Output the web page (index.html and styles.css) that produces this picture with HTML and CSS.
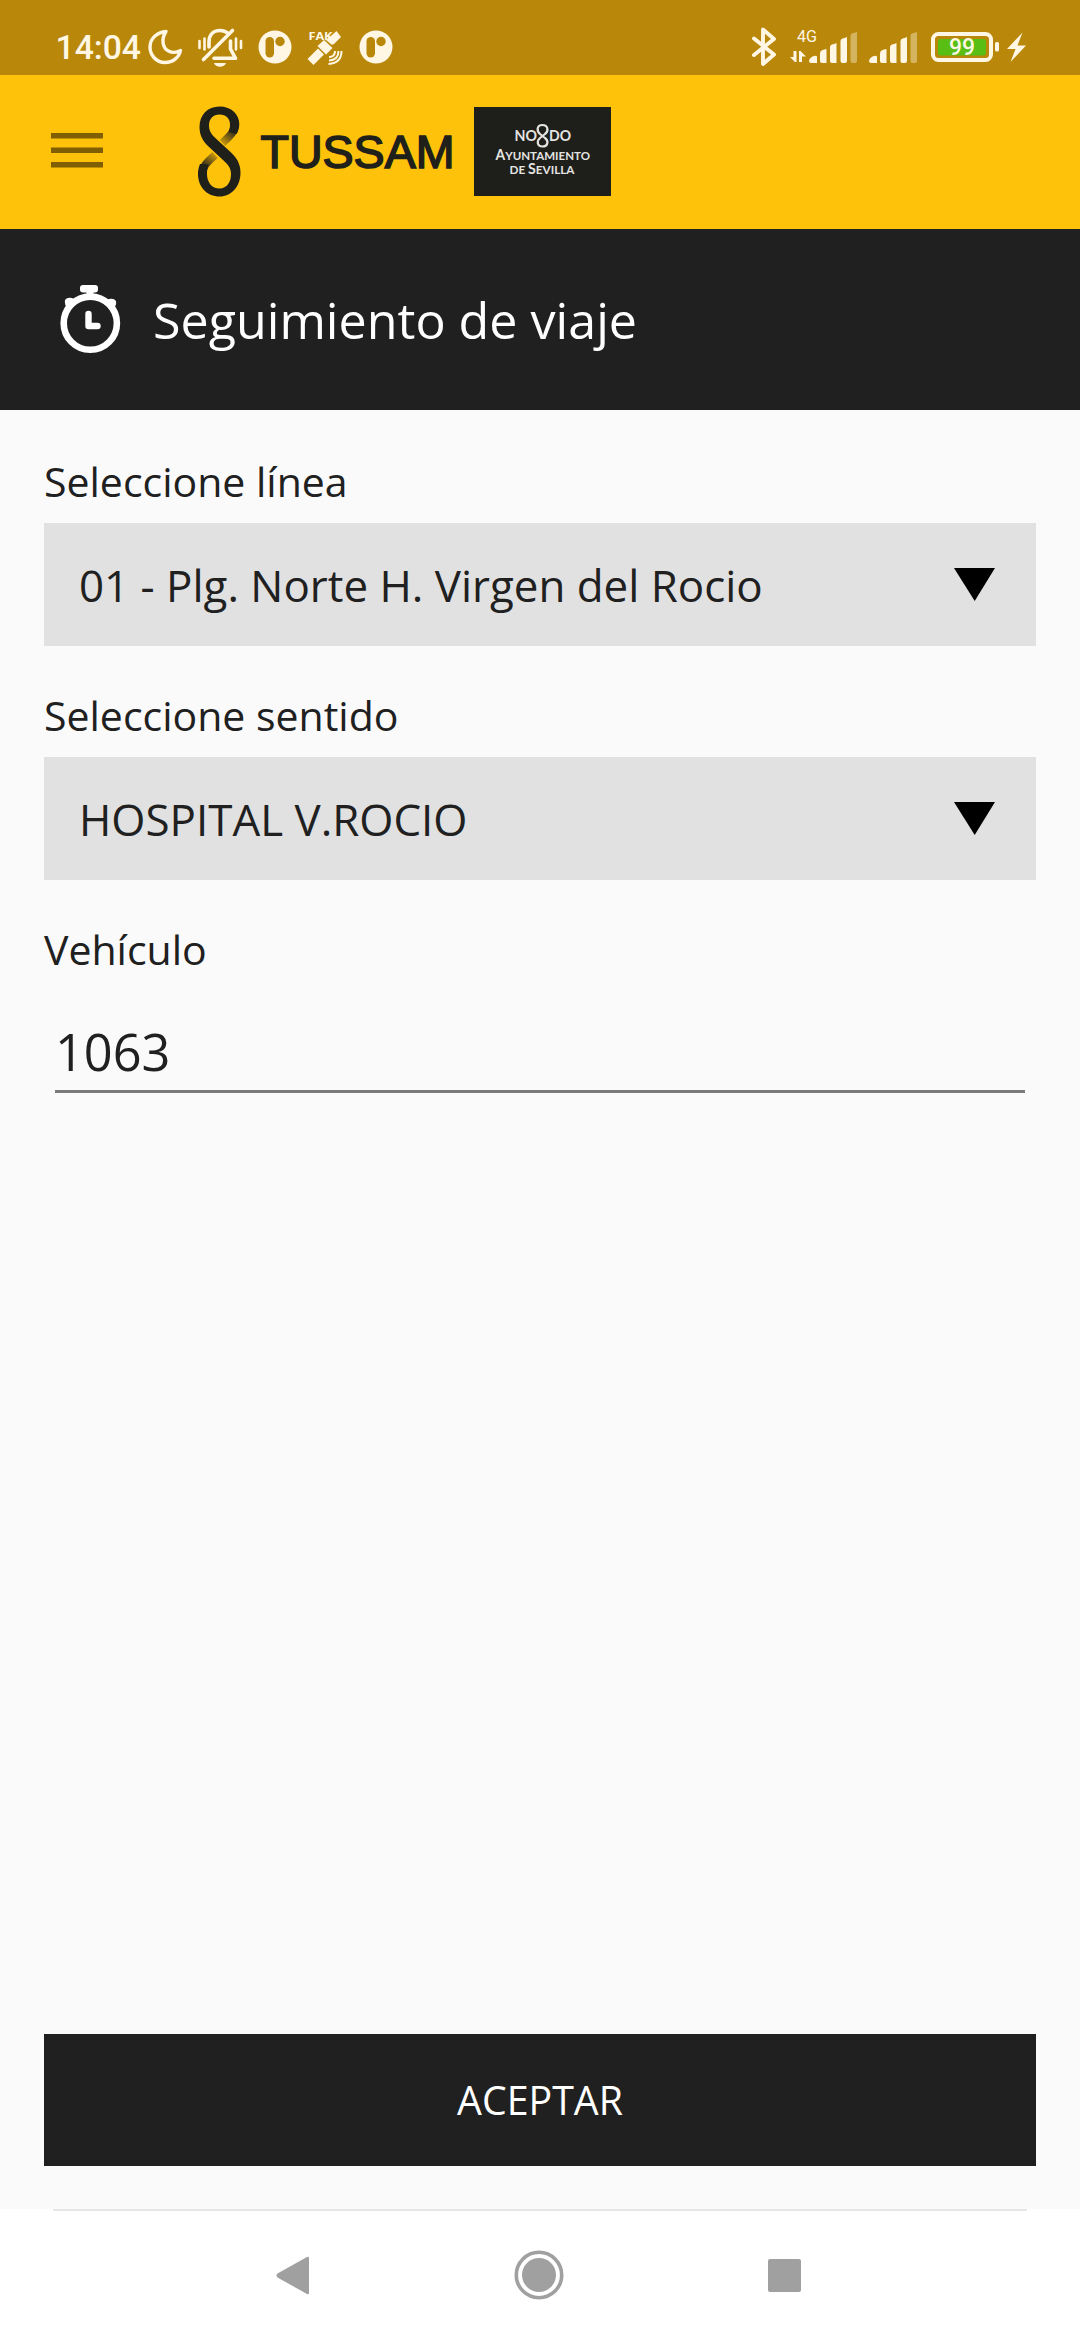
FILE: index.html
```html
<!DOCTYPE html>
<html lang="es">
<head>
<meta charset="utf-8">
<title>Seguimiento de viaje</title>
<link rel="stylesheet" href="styles.css">
</head>
<body>
<div class="screen">
  <div class="status">
    <span class="time">14:04</span>
    <svg class="moon" width="38" height="38" viewBox="146 28 38 38"><path d="M166 31.500C158 32 150 38 150 47c0 8 6 15.500 15 15.500 8 0 14-5 15.500-12-3.500 2-8 2.500-12 .5-6-3-7.500-12-2.500-19.500z" fill="none" stroke="#fff7e3" stroke-width="3.400" stroke-linejoin="round"/></svg>
    <svg class="bell" width="46" height="42" viewBox="197 27 46 42"><g fill="none" stroke="#fff7e3" stroke-width="3.600" stroke-linecap="round" stroke-linejoin="round"><path d="M209 47V42c0-7 4-11.500 11-11.500 2.500 0 5 .7 7 2M230.500 41v8l5 9.300H214M203.500 59.500l29-29"/><path d="M199.500 41v7M204.500 38.500v11M236 38.500v11M241 41v7" stroke-width="2.600"/></g><path d="M214 63h12c-1.500 5-10.500 5-12 0z" fill="#fff7e3"/></svg>
    <svg class="round" width="34" height="34" viewBox="0 0 34 34"><circle cx="17" cy="17" r="16.500" fill="#fff7e3"/><rect x="7.500" y="7" width="8.500" height="20.500" rx="4.200" fill="#b98709"/><circle cx="22" cy="11.500" r="4.700" fill="#b98709"/></svg>
    <svg class="sat" width="38" height="38" viewBox="306 29 38 38"><g fill="#fff7e3"><path d="M307.500 59l10.500-10.500 6 6L313.500 65z"/><path d="M317.500 46l6.500-6 8.500 8-6.500 6.500z"/><path d="M328.500 38l8-7 4.500 6-7.500 7.500z"/><path d="M326 40l4-4 5 6-3 3z"/></g><g fill="none" stroke="#fff7e3" stroke-width="2"><path d="M335 51q0 6-6 6M338.500 51q0 9-9.500 9.500M341.500 51q0 12-13 13"/></g><text x="308.500" y="40" class="fake" textLength="24" lengthAdjust="spacingAndGlyphs">FAK</text></svg>
    <svg class="round2" width="34" height="34" viewBox="0 0 34 34"><circle cx="17" cy="17" r="16.500" fill="#fff7e3"/><rect x="7.500" y="7" width="8.500" height="20.500" rx="4.200" fill="#b98709"/><circle cx="22" cy="11.500" r="4.700" fill="#b98709"/></svg>
    <svg class="system" width="278" height="44" viewBox="750 25 278 44">
      <path d="M753 38.500l20 16-11 9.500V29.500l11 9.500-20 16" fill="none" stroke="#fff7e3" stroke-width="3.900" stroke-linecap="round" stroke-linejoin="round"/>
      <text x="796" y="42" class="net" textLength="20" lengthAdjust="spacingAndGlyphs">4G</text>
      <g fill="#fff7e3">
        <path d="M792.500 51h3v11h-1.500l-5-5h3.500zM798 62V51h1.500l5.500 5.500h-4V62z"/>
        <path id="bars" d="M808 61q0-1.500 1.500-3l2-1.500q3.500-1.500 4.500 0V63h-6q-2 0-2-2zM819 53.500q0-2.500 2-3.200t4.500-1.300V63H821q-2 0-2-2zM829 47q0-2 2-2.500t4.500-1.500V63H831q-2 0-2-2zM839.500 41q0-2 2-2.500t4.500-1.500V61q0 2-2 2h-2.500q-2 0-2-2z"/>
        <path id="weak" opacity=".4" d="M849.500 35.500q0-2 2-2.300t4.500-1.200V61q0 2-2 2h-2.500q-2 0-2-2z"/>
        <use href="#bars" x="60"/><use href="#weak" x="60"/>
        <rect x="994" y="42" width="4" height="9.500" rx="1.500"/>
        <path d="M1021.500 32.500L1006 49h8.500l-5 13 15.500-16.500h-8.500z"/>
      </g>
      <rect x="932" y="34" width="58" height="26" rx="5.500" fill="none" stroke="#fff7e3" stroke-width="4"/>
      <rect x="937" y="39" width="48" height="16.500" rx="3" fill="#59be14"/>
      <text x="948" y="55.300" class="level" textLength="26" lengthAdjust="spacingAndGlyphs">99</text>
    </svg>
  </div>

  <header class="appbar">
    <svg width="52" height="35" viewBox="0 0 52 35"><path d="M0 0h52v5.500H0zM0 14.500h52V20H0zM0 29h52v5.500H0z" fill="#805f03"/></svg>
    <svg class="logo" width="262" height="96" viewBox="196 103 262 96">
      <defs>
        <linearGradient id="up" gradientUnits="userSpaceOnUse" x1="224" y1="144" x2="235" y2="130"><stop offset="0" stop-color="#c4940d"/><stop offset="1" stop-color="#20201b"/></linearGradient>
        <linearGradient id="down" gradientUnits="userSpaceOnUse" x1="214" y1="154" x2="204" y2="168"><stop offset="0" stop-color="#c4940d"/><stop offset="1" stop-color="#20201b"/></linearGradient>
      </defs>
      <path d="M222.500 143C230 136 235 131.500 235 123.500" fill="none" stroke="url(#up)" stroke-width="8"/>
      <path d="M215 155C206 163 202 167 202 176" fill="none" stroke="url(#down)" stroke-width="8"/>
      <path fill-rule="evenodd" fill="#20201b" d="M219.500 106.500c12 0 20 8 19.800 18-.1 4-1.300 7-2.600 9.500l-8-2c1-2.500 1.300-5 1.300-7.500 0-6-4-10-10.500-10s-10.500 4.500-10.500 11c0 6.500 3.500 10 8.500 14.500l13 12c5.500 5 10 11 10 20.500 0 14-9 24-21 24s-21.500-9-21.500-22.500c0-4 .8-7 2-10l8.500.5c-1.200 3-1.500 6-1.500 9.500 0 8.500 5 14.500 12.500 14.500S231 182 231 174c0-6-3-9.500-8-14l-14.500-13.500c-5.500-5-9-11-9-19.500 0-12 8-20.500 20-20.500z"/>
      <text x="260.500" y="168" class="brand" textLength="194" lengthAdjust="spacingAndGlyphs">TUSSAM</text>
    </svg>
    <svg class="badge" width="137" height="89" viewBox="474 107 137 89">
      <g class="council"><text x="514.500" y="140.500" font-size="15.500" textLength="22.500" lengthAdjust="spacingAndGlyphs">NO</text><text x="549" y="140.500" font-size="15.500" textLength="22" lengthAdjust="spacingAndGlyphs">DO</text>
      <text x="495.500" y="159.500" font-size="14.500" textLength="94.500" lengthAdjust="spacingAndGlyphs">A<tspan font-size="12">YUNTAMIENTO</tspan></text>
      <text x="509.500" y="173.800" font-size="12" textLength="65" lengthAdjust="spacingAndGlyphs">DE <tspan font-size="14.500">S</tspan>EVILLA</text></g>
      <path d="M542.500 125c-6 0-6 6-2.500 9l5 4c4 3 3 8.500-2.500 8.500s-6-5.500-2.500-8.500l5-4c4-3 3-9-2.500-9z" fill="none" stroke="#e4e4e2" stroke-width="2.200"/>
    </svg>
  </header>

  <div class="title">
    <svg width="62" height="70" viewBox="59 284 62 70"><g fill="#fff"><rect x="80" y="285" width="18" height="7.500" rx="3"/><path d="M86.500 291h7v5h-7zM65 300q2-3 7-2l4 2-8 8q-4-3-3-8zM116 301q-2-3-7-2l-4 2 8 7q4-2 3-7z"/></g><circle cx="90.300" cy="323.200" r="26.600" fill="none" stroke="#fff" stroke-width="6.600"/><path d="M88.500 314v12h9" fill="none" stroke="#fff" stroke-width="6.400" stroke-linecap="round" stroke-linejoin="round"/></svg>
    <h1>Seguimiento de viaje</h1>
  </div>

  <main class="form">
    <div class="label">Seleccione línea</div>
    <div class="select"><span>01 - Plg. Norte H. Virgen del Rocio</span><svg width="41" height="33" viewBox="0 0 41 33"><path d="M0 0h41L20.700 33z"/></svg></div>
    <div class="label">Seleccione sentido</div>
    <div class="select"><span>HOSPITAL V.ROCIO</span><svg width="41" height="33" viewBox="0 0 41 33"><path d="M0 0h41L20.700 33z"/></svg></div>
    <div class="label">Vehículo</div>
    <div class="field">1063</div>
    <div class="accept">ACEPTAR</div>
  </main>

  <nav class="nav">
    <svg width="34" height="40" viewBox="275 2255 34 40"><path d="M309 2258v35q0 2-2 1l-29.500-16.500q-2-2 0-4L307 2257q2-1 2 1z" fill="#a0a0a0"/></svg>
    <svg width="50" height="50" viewBox="0 0 50 50"><circle cx="25" cy="25" r="22.700" fill="none" stroke="#a0a0a0" stroke-width="3.600"/><circle cx="25" cy="25" r="17" fill="#a0a0a0"/></svg>
    <svg width="33" height="33" viewBox="0 0 33 33"><rect width="33" height="33" rx="2" fill="#a0a0a0"/></svg>
  </nav>
</div>
</body>
</html>
```
FILE: styles.css
```css
* { box-sizing: border-box; }
body { margin: 0; font-family: "Open Sans", sans-serif; color: #202020; }
svg { display: block; flex: none; }
.screen { width: 1080px; height: 2340px; display: flex; flex-direction: column; background: #fafafa; overflow: hidden; }

.status { height: 75px; flex: none; background: #b98709; display: flex; align-items: flex-start; padding-left: 55.5px; color: #fff7e3; }
.time { font: 500 33.700px/40px Roboto, sans-serif; width: 90.500px; margin-top: 28px; white-space: nowrap; }
.moon { margin-top: 28px; }
.bell { margin: 27px 0 0 13px; }
.round { margin: 30px 0 0 15px; }
.sat { margin: 29px 0 0 14px; }
.round2 { margin: 30px 0 0 14.500px; }
.system { margin: 25px 0 0 358px; }
.fake { font: 700 10.500px "Open Sans", sans-serif; fill: #fff7e3; }
.net { font: 400 16px Roboto, sans-serif; fill: #fff7e3; }
.level { font: 500 23px Roboto, sans-serif; fill: #fff7e3; }

.appbar { height: 154px; flex: none; background: #ffc20a; display: flex; align-items: flex-start; padding-left: 51px; }
.appbar > svg { margin-top: 58px; }
.appbar .logo { margin: 28px 0 0 93px; }
.appbar .badge { margin: 32px 0 0 16px; background: #1e1e1a; }
.brand { font: 400 46px "Liberation Sans", sans-serif; fill: #20201b; stroke: #20201b; stroke-width: 1.600; }
.council { font-family: Lato, sans-serif; font-weight: 700; fill: #e4e4e2; }

.title { height: 181px; flex: none; background: #202020; display: flex; align-items: flex-start; padding: 55px 0 0 59px; }
.title h1 { margin: 2px 0 0 32px; font-size: 50.200px; line-height: 68px; font-weight: 400; color: #fff; white-space: nowrap; }

.form { flex: 1; display: flex; flex-direction: column; padding: 2px 44px 43px; }
.label { font-size: 41px; line-height: 56px; height: 56px; margin: 41px 0 14px; }
.select { height: 123px; background: #e1e1e1; display: flex; align-items: center; justify-content: space-between; padding: 0 41px 0 35px; font-size: 43.900px; white-space: nowrap; }
.select span { padding-top: 1px; }
.select svg { margin-bottom: 1px; }
.field { height: 102px; margin: 0 11px; border-bottom: 3px solid #7a7a7a; font-size: 50.500px; line-height: 68px; padding-top: 27px; }
.accept { margin-top: auto; height: 132px; background: #202020; color: #fff; font-size: 39.300px; line-height: 132px; text-align: center; }

.nav { height: 131px; flex: none; background: linear-gradient(#e6e6e6, #e6e6e6) 53px 0 / 974px 2px no-repeat #fff; display: flex; align-items: center; justify-content: space-between; padding: 1px 279px 0 275px; }
```
